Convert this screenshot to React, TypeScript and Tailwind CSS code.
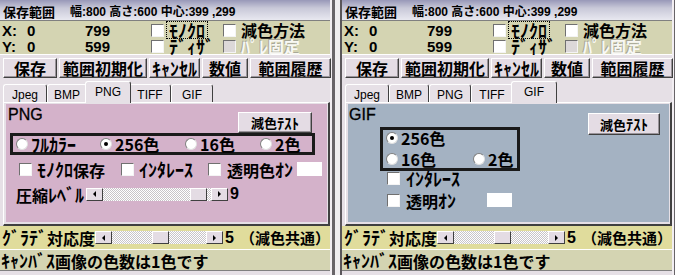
import React from "react";

const JP = "font-['Noto_Sans_CJK_JP',sans-serif] font-bold leading-none whitespace-nowrap";
const LJ = "font-['Liberation_Sans','Noto_Sans_CJK_JP',sans-serif] leading-none whitespace-nowrap";

// half-width katakana runs are drawn a little larger so they fill the cell like the bitmap font
function J({ t }: { t: string }) {
  const parts = t.split(/([\uFF61-\uFF9F]+)/);
  return (
    <>
      {parts.map((p, i) =>
        /[\uFF61-\uFF9F]/.test(p) ? (
          <span key={i} className="text-[1.125em] leading-[0.89]">
            {p}
          </span>
        ) : (
          <React.Fragment key={i}>{p}</React.Fragment>
        )
      )}
    </>
  );
}

function Check({ disabled = false }: { disabled?: boolean }) {
  return (
    <span
      className={`block shrink-0 w-[13px] h-[13px] border border-t-[#707070] border-l-[#707070] border-r-[#f4f4f4] border-b-[#f4f4f4] ${
        disabled ? "bg-[#dcd8d8]" : "bg-white"
      }`}
    />
  );
}

function Radio({ on = false }: { on?: boolean }) {
  return (
    <span className="flex shrink-0 items-center justify-center w-[12px] h-[12px] rounded-full bg-white border border-t-[#808080] border-l-[#808080] border-r-[#e0e0e0] border-b-[#e0e0e0]">
      {on && <span className="block w-[4px] h-[4px] rounded-full bg-black" />}
    </span>
  );
}

function Btn({ className = "", children }: { className?: string; children: React.ReactNode }) {
  return (
    <div
      className={`flex shrink-0 items-center justify-center bg-[#e4dce4] border border-t-white border-l-white border-r-[#404040] border-b-[#404040] shadow-[inset_-1px_-1px_0_#9a949a] ${JP} ${className}`}
    >
      {children}
    </div>
  );
}

function Arrow({ dir }: { dir: "l" | "r" }) {
  return (
    <span className="flex shrink-0 items-center justify-center w-[17px] h-full bg-[#e4dce4] border border-t-white border-l-white border-r-[#404040] border-b-[#404040]">
      {dir === "l" ? (
        <span className="block w-0 h-0 border-y-[3px] border-y-transparent border-r-[3px] border-r-black" />
      ) : (
        <span className="block w-0 h-0 border-y-[3px] border-y-transparent border-l-[3px] border-l-black" />
      )}
    </span>
  );
}

const TRACK =
  "h-full bg-[image:repeating-conic-gradient(#c8c4c8_0_25%,#ffffff_0_50%)] bg-[length:2px_2px]";

function Slider({ className, leftCls, rightCls }: { className: string; leftCls: string; rightCls: string }) {
  return (
    <div className={`flex shrink-0 h-[13px] ${className}`}>
      <Arrow dir="l" />
      <span className={`${TRACK} ${leftCls}`} />
      <span className="block shrink-0 w-[17px] h-full bg-[#e4dce4] border border-t-white border-l-white border-r-[#404040] border-b-[#404040]" />
      <span className={`${TRACK} ${rightCls}`} />
      <Arrow dir="r" />
    </div>
  );
}

const TABS: [string, string, string][] = [
  ["Jpeg", "w-[44px]", "w-[48px]"],
  ["BMP", "w-[40px]", "w-[44px]"],
  ["PNG", "w-[42px]", "w-[46px]"],
  ["TIFF", "w-[42px]", "w-[46px]"],
  ["GIF", "w-[42px]", "w-[46px]"],
];

function Tabs({ sel }: { sel: string }) {
  return (
    <div className="h-[21px] flex items-end pl-[3px]">
      {TABS.map(([name, w, ws]) =>
        name === sel ? (
          <div
            key={name}
            className={`${ws} h-[22px] -mx-[2px] -mb-[1px] relative z-10 bg-[#e6e0e6] border-t border-l border-t-white border-l-white border-r border-r-[#404040] rounded-t-[3px] flex justify-center items-start pt-[4px] text-[12px] ${LJ}`}
          >
            {name}
          </div>
        ) : (
          <div
            key={name}
            className={`${w} h-[18px] bg-[#e6e0e6] border-t border-l border-t-white border-l-white border-r border-r-[#404040] rounded-t-[3px] flex justify-center items-start pt-[4px] text-[12px] ${LJ}`}
          >
            {name}
          </div>
        )
      )}
    </div>
  );
}

function Window({ first, sel, children }: { first: boolean; sel: string; children: React.ReactNode }) {
  return (
    <div
      className={`shrink-0 flex border-r-[3px] border-r-[#686468] ${
        first ? "" : "border-l-2 border-l-[#5a565a]"
      }`}
    >
      <div className="w-[332px] flex flex-col bg-[#e6e0e6] border-r-2 border-r-[#f2eef2] text-black">
        {/* title */}
        <div className="h-[20px] flex items-center pt-[3px] bg-[linear-gradient(to_bottom,#9898b8_0%,#c8c8d8_40%,#e8e8f0_100%)]">
          <span className={`${JP} text-[13px] ml-[3px] w-[67px]`}>保存範囲</span>
          <span className={`${LJ} font-bold text-[12px]`}>幅:800 高さ:600 中心:399 ,299</span>
        </div>
        {/* khaki info */}
        <div className="h-[35px] border-t border-t-[#808080] border-b border-b-white bg-[#d4d4b2] pt-[1px] flex flex-col">
          <div className="h-[16px] flex items-center">
            <span className={`${LJ} font-bold text-[15px] w-[27px] pl-[2px]`}>X:</span>
            <span className={`${LJ} font-bold text-[15px] w-[58px]`}>0</span>
            <span className={`${LJ} font-bold text-[15px] w-[66px]`}>799</span>
            <Check />
            <span className={`${JP} text-[16px] ml-[3px] w-[40px] h-[16px] flex items-center pl-[2px] outline-1 outline-dotted outline-black`}>
              <J t="ﾓﾉｸﾛ" />
            </span>
            <span className="ml-[16px]">
              <Check />
            </span>
            <span className={`${JP} text-[16px] ml-[5px]`}>減色方法</span>
          </div>
          <div className="h-[16px] flex items-center">
            <span className={`${LJ} font-bold text-[15px] w-[27px] pl-[2px]`}>Y:</span>
            <span className={`${LJ} font-bold text-[15px] w-[58px]`}>0</span>
            <span className={`${LJ} font-bold text-[15px] w-[66px]`}>599</span>
            <Check />
            <span className={`${JP} text-[16px] ml-[3px] w-[40px] h-[16px] pl-[2px] flex items-center`}>
              <J t="ﾃﾞｨｻﾞ" />
            </span>
            <span className="ml-[16px]">
              <Check disabled />
            </span>
            <span className={`${JP} text-[16px] ml-[5px] h-[16px] flex items-center text-[#f8f8f4] [text-shadow:-1px_-1px_0_#a8a898]`}>
              <J t="ﾊﾟﾚ固定" />
            </span>
          </div>
        </div>
        {/* buttons */}
        <div className="h-[26px] flex items-start pt-[3px] pl-[3px] gap-[2px]">
          <Btn className="w-[54px] h-[20px] text-[16px]">保存</Btn>
          <Btn className="w-[88px] h-[20px] text-[16px]">範囲初期化</Btn>
          <Btn className="w-[51px] h-[20px] text-[16px]">
            <J t="ｷｬﾝｾﾙ" />
          </Btn>
          <Btn className="w-[46px] h-[20px] text-[16px]">数値</Btn>
          <Btn className="w-[81px] h-[20px] text-[16px]">範囲履歴</Btn>
        </div>
        {/* tabs */}
        <Tabs sel={sel} />
        {/* page */}
        <div className="h-[124px] ml-[3px] border-t border-l border-t-white border-l-white border-r-2 border-b-2 border-r-[#404040] border-b-[#404040] pt-[1px] pl-[2px] pr-[1px] pb-[2px]">
          {children}
        </div>
        {/* yellow */}
        <div className="h-[23px] bg-[#e0dc9c] flex items-center">
          <span className={`${JP} text-[16px] ml-[2px] w-[98px]`}>
            <J t="ｸﾞﾗﾃﾞ対応度" />
          </span>
          <Slider className="w-[128px]" leftCls="w-[40px]" rightCls="w-[37px]" />
          <span className={`${LJ} font-bold text-[16px] ml-[2px]`}>5</span>
          <span className={`${JP} text-[15px] ml-[6px]`}>（減色共通）</span>
        </div>
        {/* status */}
        <div className="h-[21px] border-t border-t-white bg-[#d4d4b2] flex items-center">
          <span className={`${JP} text-[16px] ml-[1px]`}>
            <J t="ｷｬﾝﾊﾞｽ画像の色数は1色です" />
          </span>
        </div>
        <div className="h-[5px] border-t border-t-[#808080] bg-[#e6e0e6]" />
      </div>
    </div>
  );
}

function PngPage() {
  return (
    <div className="h-full bg-[#d4b2ca] flex flex-col">
      <div className="h-[29px] shrink-0 flex items-start justify-between">
        <span className={`${LJ} text-[16px] ml-[2px] mt-[3px] [-webkit-text-stroke:0.3px_black]`}>PNG</span>
        <Btn className="mt-[8px] mr-[15px] w-[74px] h-[21px] text-[13px]">
          <J t="減色ﾃｽﾄ" />
        </Btn>
      </div>
      <div className="ml-[4px] w-[305px] h-[22px] shrink-0 border-[3px] border-[#1a1a1a] flex items-center pl-[3px]">
        <div className="w-[84px] flex items-center gap-[3px]">
          <Radio />
          <span className={`${JP} text-[16px]`}>
            <J t="ﾌﾙｶﾗｰ" />
          </span>
        </div>
        <div className="w-[85px] flex items-center gap-[3px]">
          <Radio on />
          <span className={`${JP} text-[16px]`}>256色</span>
        </div>
        <div className="w-[75px] flex items-center gap-[3px]">
          <Radio />
          <span className={`${JP} text-[16px]`}>16色</span>
        </div>
        <div className="flex items-center gap-[3px]">
          <Radio />
          <span className={`${JP} text-[16px]`}>2色</span>
        </div>
      </div>
      <div className="mt-[7px] h-[14px] shrink-0 ml-[13px] flex items-center">
        <div className="w-[102px] flex items-center gap-[5px]">
          <Check />
          <span className={`${JP} text-[16px]`}>
            <J t="ﾓﾉｸﾛ保存" />
          </span>
        </div>
        <div className="w-[87px] flex items-center gap-[5px]">
          <Check />
          <span className={`${JP} text-[16px]`}>
            <J t="ｲﾝﾀﾚｰｽ" />
          </span>
        </div>
        <div className="w-[89px] flex items-center gap-[6px]">
          <Check />
          <span className={`${JP} text-[16px]`}>
            <J t="透明色ｵﾝ" />
          </span>
        </div>
        <span className="block w-[25px] h-[14px] bg-white" />
      </div>
      <div className="mt-[11px] h-[14px] shrink-0 ml-[10px] flex items-center">
        <span className={`${JP} text-[16px] w-[70px]`}>
          <J t="圧縮ﾚﾍﾞﾙ" />
        </span>
        <Slider className="w-[142px]" leftCls="w-[87px]" rightCls="w-[4px]" />
        <span className={`${LJ} font-bold text-[16px] ml-[2px]`}>9</span>
      </div>
    </div>
  );
}

function GifPage() {
  return (
    <div className="h-full bg-[#a4b2c2] flex flex-col">
      <div className="h-[23px] shrink-0 flex items-start justify-between">
        <span className={`${LJ} text-[16px] ml-[1px] mt-[3px] [-webkit-text-stroke:0.3px_black]`}>GIF</span>
        <Btn className="mt-[9px] mr-[9px] w-[72px] h-[22px] text-[13px] relative z-10">
          <J t="減色ﾃｽﾄ" />
        </Btn>
      </div>
      <div className="ml-[32px] w-[140px] h-[44px] shrink-0 border-[3px] border-[#1a1a1a] flex flex-col pl-[3px] gap-[5px]">
        <div className="h-[16px] flex items-center gap-[3px]">
          <Radio on />
          <span className={`${JP} text-[16px]`}>256色</span>
        </div>
        <div className="h-[16px] flex items-center">
          <div className="w-[87px] flex items-center gap-[3px]">
            <Radio />
            <span className={`${JP} text-[16px]`}>16色</span>
          </div>
          <div className="flex items-center gap-[3px]">
            <Radio />
            <span className={`${JP} text-[16px]`}>2色</span>
          </div>
        </div>
      </div>
      <div className="h-[14px] shrink-0 ml-[39px] flex items-center gap-[6px]">
        <Check />
        <span className={`${JP} text-[16px]`}>
          <J t="ｲﾝﾀﾚｰｽ" />
        </span>
      </div>
      <div className="mt-[8px] h-[14px] shrink-0 ml-[39px] flex items-center">
        <div className="w-[100px] flex items-center gap-[6px]">
          <Check />
          <span className={`${JP} text-[16px]`}>
            <J t="透明ｵﾝ" />
          </span>
        </div>
        <span className="block w-[25px] h-[14px] bg-white" />
      </div>
    </div>
  );
}

export default function App() {
  return (
    <div className="w-[675px] h-[275px] overflow-hidden flex bg-[#f0eef0]">
      <Window first sel="PNG">
        <PngPage />
      </Window>
      <div className="w-[5px] shrink-0" />
      <Window first={false} sel="GIF">
        <GifPage />
      </Window>
    </div>
  );
}
